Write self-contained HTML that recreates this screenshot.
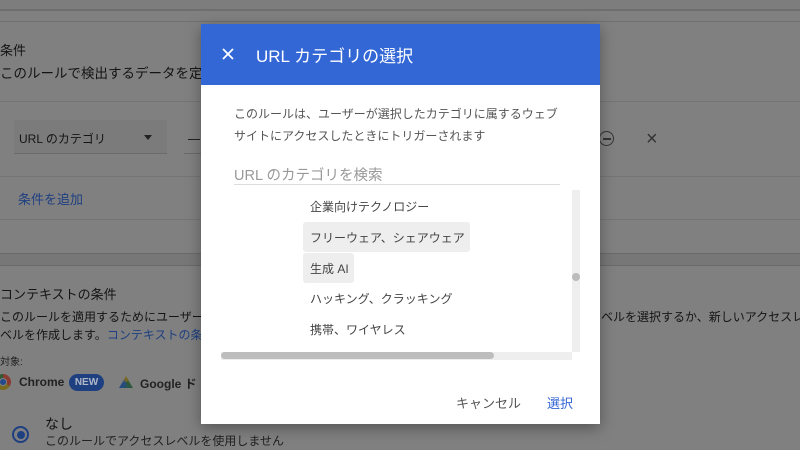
<!DOCTYPE html>
<html><head><meta charset="utf-8"><style>
*{margin:0;padding:0;box-sizing:border-box}
body{width:800px;height:450px;overflow:hidden;background:#808080;font-family:"Liberation Sans","Noto Sans CJK JP",sans-serif;position:relative}
.a{position:absolute;white-space:nowrap}
.bg{color:#141414}
</style></head><body>
<div class="a" style="left:0;top:0;width:800px;height:10px;background:#7d7d7d"></div>
<div class="a" style="left:0;top:9px;width:800px;height:2px;background:#6e6e6e"></div>
<div class="a" style="left:0;top:21px;width:800px;height:1px;background:#707070"></div>
<div class="a bg" style="left:0;top:40px;font-size:13px">条件</div>
<div class="a bg" style="left:0;top:62px;font-size:13.5px">このルールで検出するデータを定義</div>
<div class="a" style="left:0;top:101px;width:800px;height:1px;background:#757575"></div>
<div class="a" style="left:14px;top:120px;width:153px;height:34px;background:#7b7b7b;border-bottom:1px solid #6a6a6a"></div>
<div class="a bg" style="left:19px;top:130px;font-size:12px">URL のカテゴリ</div>
<div class="a" style="left:144px;top:135px;border-left:4px solid transparent;border-right:4px solid transparent;border-top:5px solid #222"></div>
<div class="a" style="left:184px;top:120px;width:20px;height:34px;border-bottom:1px solid #6a6a6a"></div>
<div class="a" style="left:188px;top:139px;width:12px;height:1px;background:#222"></div>
<div class="a" style="left:599px;top:131px;width:15px;height:15px;border:1.5px solid #333;border-radius:50%"></div>
<div class="a" style="left:603px;top:138px;width:8px;height:1.5px;background:#333"></div>
<div class="a" style="left:646px;top:128px;font-size:20px;color:#333">×</div>
<div class="a" style="left:0;top:176px;width:800px;height:1px;background:#757575"></div>
<div class="a" style="left:18px;top:189px;font-size:13px;color:#1e3f80">条件を追加</div>
<div class="a" style="left:0;top:219px;width:800px;height:1px;background:#757575"></div>
<div class="a" style="left:0;top:253px;width:800px;height:13px;background:#777;border-top:1px solid #6a6a6a;border-bottom:1px solid #6a6a6a"></div>
<div class="a bg" style="left:0;top:284px;font-size:13px">コンテキストの条件</div>
<div class="a bg" style="left:0;top:308px;font-size:12px">このルールを適用するためにユーザーが</div>
<div class="a bg" style="left:601px;top:308px;font-size:12px">ベルを選択するか、新しいアクセスレ</div>
<div class="a bg" style="left:0;top:326px;font-size:12px">ベルを作成します。<span style="color:#1e3f80">コンテキストの条</span></div>
<div class="a" style="left:0;top:353px;font-size:10px;color:#222">対象:</div>
<div class="a" style="left:-5px;top:374px;width:16px;height:16px;border-radius:50%;background:conic-gradient(#8a3a30 0 120deg,#7a6a20 120deg 240deg,#2f5a36 240deg);"></div>
<div class="a" style="left:-1px;top:378px;width:8px;height:8px;border-radius:50%;background:#234a8a;border:1.5px solid #808080"></div>
<div class="a bg" style="left:19px;top:375px;font-size:12px;font-weight:bold;color:#222">Chrome</div>
<div class="a" style="left:69px;top:374px;width:35px;height:17px;border-radius:9px;background:#1e3f80;color:#b0b8c8;font-size:10px;font-weight:bold;text-align:center;line-height:17px">NEW</div>
<div class="a" style="left:119px;top:376px;width:14px;height:12px;background:conic-gradient(from 0deg,#806a20,#2f5a36,#234a8a,#806a20);clip-path:polygon(50% 0,100% 100%,0 100%)"></div>
<div class="a bg" style="left:140px;top:375px;font-size:12px;font-weight:bold;color:#222">Google ド</div>
<div class="a" style="left:12px;top:426px;width:17px;height:17px;border:2px solid #1e3f80;border-radius:50%"></div>
<div class="a" style="left:16.5px;top:430.5px;width:8px;height:8px;background:#1e3f80;border-radius:50%"></div>
<div class="a bg" style="left:45px;top:414px;font-size:14px">なし</div>
<div class="a bg" style="left:45px;top:432px;font-size:12px;color:#222">このルールでアクセスレベルを使用しません</div>

<div class="a" style="left:201px;top:24px;width:399px;height:400px;background:#fff;box-shadow:0 4px 14px rgba(0,0,0,.35)">
 <div class="a" style="left:0;top:0;width:399px;height:61px;background:#3367d6"></div>
 <svg class="a" style="left:21px;top:24px" width="12" height="12" viewBox="0 0 12 12"><path d="M1 1L11 11M11 1L1 11" stroke="#fff" stroke-width="1.8"/></svg>
 <div class="a" style="left:55px;top:18px;font-size:17px;color:#fff">URL カテゴリの選択</div>
 <div class="a" style="left:33px;top:79px;font-size:12px;color:#555;line-height:22px">このルールは、ユーザーが選択したカテゴリに属するウェブ<br>サイトにアクセスしたときにトリガーされます</div>
 <div class="a" style="left:33px;top:140px;font-size:14.5px;color:#999">URL のカテゴリを検索</div>
 <div class="a" style="left:33px;top:160px;width:326px;height:1px;background:#ddd"></div>
 <div class="a" style="left:109px;top:174px;font-size:12px;color:#444">企業向けテクノロジー</div>
 <div class="a" style="left:102px;top:198px;width:167px;height:30px;background:#eee;border-radius:3px"></div>
 <div class="a" style="left:109px;top:205px;font-size:12px;color:#444">フリーウェア、シェアウェア</div>
 <div class="a" style="left:102px;top:229px;width:51px;height:30px;background:#eee;border-radius:3px"></div>
 <div class="a" style="left:109px;top:236px;font-size:12px;color:#444">生成 AI</div>
 <div class="a" style="left:109px;top:266px;font-size:12px;color:#444">ハッキング、クラッキング</div>
 <div class="a" style="left:109px;top:297px;font-size:12px;color:#444">携帯、ワイヤレス</div>
 <div class="a" style="left:371px;top:166px;width:8px;height:162px;background:#eee"></div>
 <div class="a" style="left:371px;top:249px;width:8px;height:8px;border-radius:50%;background:#bbb"></div>
 <div class="a" style="left:20px;top:328px;width:351px;height:8px;background:#eee"></div>
 <div class="a" style="left:20px;top:328px;width:273px;height:7px;background:#bdbdbd;border-radius:4px"></div>
 <div class="a" style="left:255px;top:369px;font-size:13px;color:#555">キャンセル</div>
 <div class="a" style="left:346px;top:369px;font-size:13px;color:#3367d6">選択</div>
</div>
</body></html>
